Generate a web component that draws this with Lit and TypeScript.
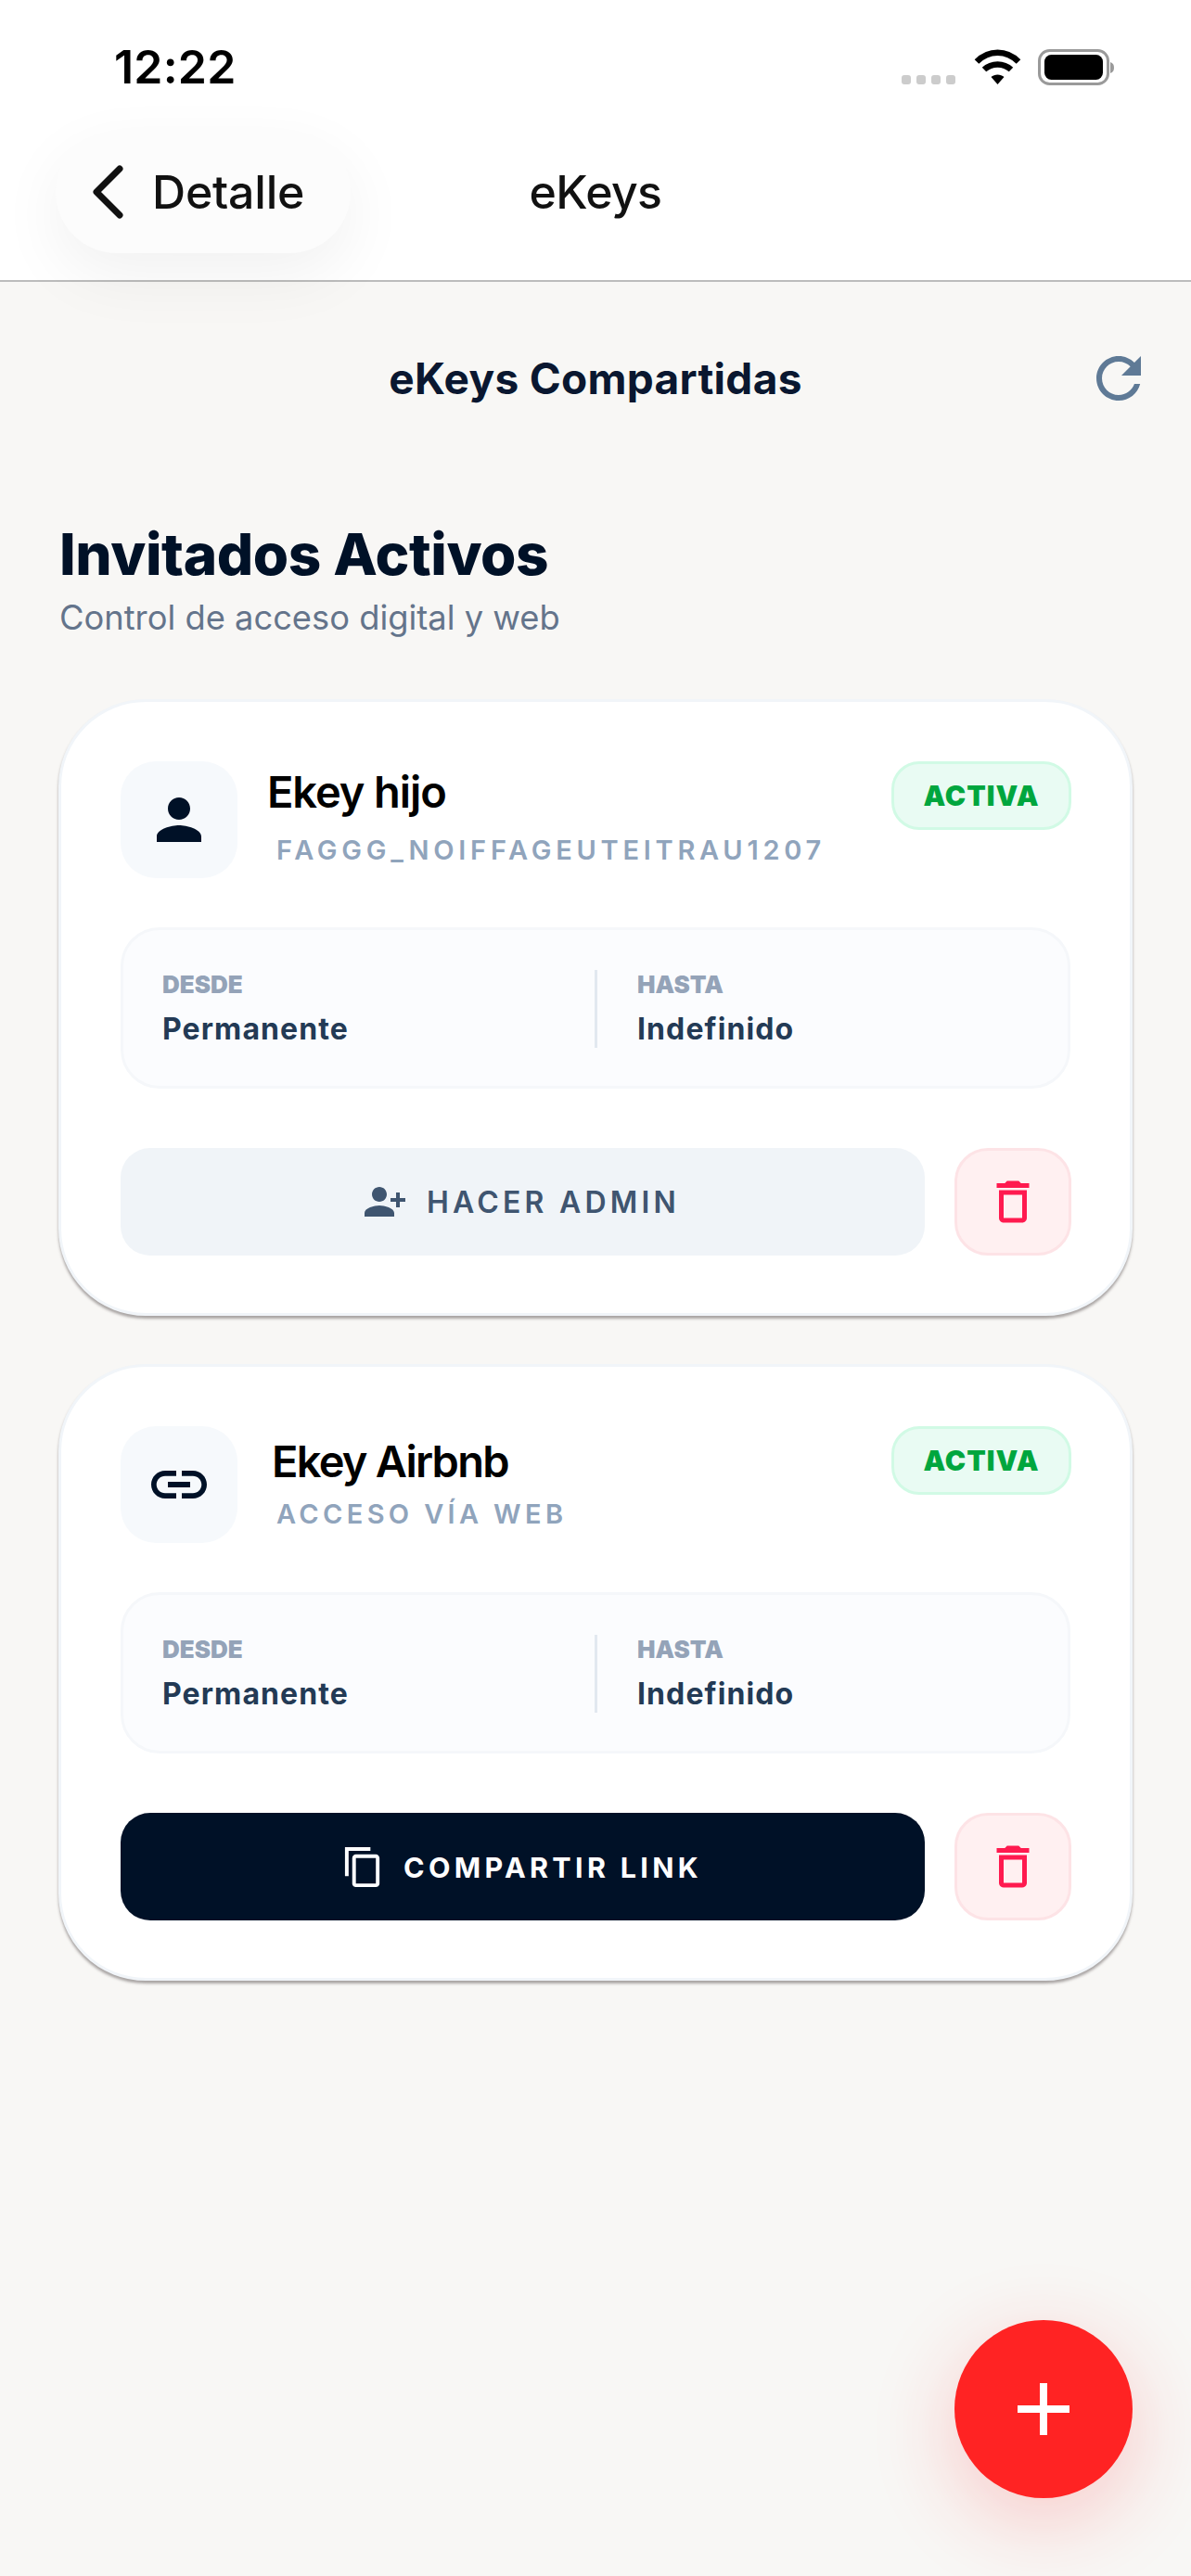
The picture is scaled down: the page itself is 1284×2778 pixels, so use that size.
import { LitElement, html, css, svg } from "lit";
import { customElement } from "lit/decorators.js";

const ico = (size: number, body: unknown, cls = "") =>
  html`<svg class=${cls} width=${size} height=${size} viewBox="0 0 24 24" fill="currentColor">${body}</svg>`;

const PERSON = svg`<path d="M12 12c2.21 0 4-1.79 4-4s-1.79-4-4-4-4 1.79-4 4 1.79 4 4 4zm0 2c-2.67 0-8 1.34-8 4v2h16v-2c0-2.66-5.33-4-8-4z"/>`;
const LINK = svg`<path d="M3.9 12c0-1.71 1.39-3.1 3.1-3.1h4V7H7c-2.76 0-5 2.24-5 5s2.24 5 5 5h4v-1.9H7c-1.71 0-3.1-1.39-3.1-3.1zM8 13h8v-2H8v2zm9-6h-4v1.9h4c1.71 0 3.1 1.39 3.1 3.1s-1.39 3.1-3.1 3.1h-4V17h4c2.76 0 5-2.24 5-5s-2.24-5-5-5z"/>`;
const TRASH = svg`<path d="M6 19c0 1.1.9 2 2 2h8c1.1 0 2-.9 2-2V7H6v12zM8 9h8v10H8V9zm7.5-5l-1-1h-5l-1 1H5v2h14V4h-3.5z"/>`;
const ADD = svg`<path transform="translate(24 0) scale(-1 1)" d="M15 12c2.21 0 4-1.79 4-4s-1.79-4-4-4-4 1.79-4 4 1.79 4 4 4zm-9-2V7H4v3H1v2h3v3h2v-3h3v-2H6zm9 4c-2.67 0-8 1.34-8 4v2h16v-2c0-2.66-5.33-4-8-4z"/>`;
const COPY = svg`<path d="M16 1H2v16h2V3h12V1zm3 4H8c-1.1 0-2 .9-2 2v14c0 1.1.9 2 2 2h11c1.1 0 2-.9 2-2V7c0-1.1-.9-2-2-2zm0 16H8V7h11v14z"/>`;
const REFRESH = svg`<path d="M17.65 6.35C16.2 4.9 14.21 4 12 4c-4.42 0-7.99 3.58-7.99 8s3.57 8 7.99 8c3.73 0 6.84-2.55 7.73-6h-2.08c-.82 2.33-3.04 4-5.65 4-3.31 0-6-2.69-6-6s2.69-6 6-6c1.66 0 3.14.69 4.22 1.78L13 11h7V4l-2.35 2.35z"/>`;

@customElement("app-root")
export class AppRoot extends LitElement {
  static styles = css`
    :host { display: block; font-family: Inter, "Liberation Sans", sans-serif; }
    * { box-sizing: border-box; }
    .page { position: relative; width: 1284px; height: 2778px; background: #f8f7f5; overflow: hidden; }

    .top { background: #fff; height: 304px; border-bottom: 2px solid #bcbcbc; }
    .status { height: 141px; display: flex; justify-content: space-between; padding: 47px 82px 0 123px; }
    .time { font-size: 50px; font-weight: 600; line-height: 50px; color: #000; letter-spacing: 0.2px; }
    .status-icons { display: flex; gap: 0; height: 40px; margin-top: 6px; }
    .status-icons svg { display: block; }

    .nav { display: grid; grid-template-columns: 1fr auto 1fr; align-items: center; height: 132px; padding-left: 60px; }
    .back { justify-self: start; display: flex; align-items: center; gap: 31px; width: 318px; height: 132px; padding-left: 40px;
      border-radius: 66px; background: #fcfcfc; box-shadow: 0 24px 70px rgba(0, 0, 0, 0.06); color: #111; font-size: 50px; font-weight: 450; letter-spacing: -0.2px; }
    .nav-title { font-size: 50px; font-weight: 500; color: #111; margin-left: -60px; letter-spacing: -0.6px; }

    .section { display: grid; grid-template-columns: 1fr auto 1fr; align-items: center; height: 72px; margin-top: 68px; padding-right: 42px; }
    .section h2 { grid-column: 2; margin: 0; font-size: 46px; font-weight: 700; color: #0a1730; margin-right: -42px; letter-spacing: 0.3px; }
    .refresh { grid-column: 3; justify-self: end; color: #5f7a96; display: block; }

    .intro { padding: 116px 64px 0; }
    .intro h1 { margin: 0; font-size: 62px; line-height: 76px; font-weight: 800; color: #001127; letter-spacing: -0.4px; }
    .intro p { margin: 8px 0 0; font-size: 36.3px; line-height: 44px; color: #64748b; font-weight: 400; }

    .cards { display: flex; flex-direction: column; gap: 52px; padding: 0 63px; margin-top: 66px; }
    .card { height: 665px; border: 3px solid #f1f5f9; border-radius: 94px; background: #fff; padding: 64px 63px 0 64px;
      box-shadow: 0 3px 3px rgba(60, 50, 50, 0.42); }

    .head { display: flex; height: 126px; }
    .avatar { width: 126px; height: 126px; flex: none; border-radius: 38px; background: #f6f9fc; color: #001127;
      display: flex; align-items: center; justify-content: center; }
    .who { flex: 1; min-width: 0; display: flex; flex-direction: column; }
    .name { font-size: 47px; line-height: 56px; font-weight: 640; color: #000; }
    .sub { font-size: 29px; line-height: 36px; font-weight: 600; color: #90a4bc; white-space: nowrap; margin-left: 42px; }
    .person .name { margin: 5px 0 0 32px; letter-spacing: -1.1px; }
    .person .sub { margin-top: 17px; letter-spacing: 4.74px; }
    .weblink .name { margin: 10px 0 0 37px; letter-spacing: -1.75px; }
    .weblink .sub { margin-top: 11px; letter-spacing: 4.35px; }
    .badge { flex: none; width: 194px; height: 74px; border: 3px solid #d1fae5; border-radius: 30px; background: #e9fbf3;
      color: #00a63e; font-size: 30px; font-weight: 900; letter-spacing: 1px; display: flex; align-items: center; justify-content: center; }

    .info { display: flex; height: 174px; margin-top: 53px; margin-right: 1px; padding: 43px 0 0 42px; border: 3px solid #f5f7fa; border-radius: 42px; background: #fbfcfe; }
    .col { width: 466px; height: 84px; }
    .col + .col { width: auto; border-left: 3px solid #e2e8f0; padding-left: 43px; }
    .lab { font-size: 26px; line-height: 32px; font-weight: 900; color: #94a3b8; }
    .val { font-size: 32px; line-height: 40px; margin-top: 12px; font-weight: 700; color: #233a55; letter-spacing: 1.1px; white-space: nowrap; }

    .actions { display: flex; gap: 32px; margin-top: 64px; }
    .btn { flex: 1; height: 116px; border-radius: 32px; display: flex; align-items: center; justify-content: center;
      font-size: 32px; font-weight: 600; letter-spacing: 4.2px; white-space: nowrap; }
    .btn.soft { background: #f0f4f8; color: #3f5570; gap: 21px; padding-right: 3px; }
    .btn.dark { background: #001127; color: #fff; gap: 20px; font-size: 30.5px; font-weight: 700; letter-spacing: 4.3px; padding-right: 2px; }
    .del { width: 126px; height: 116px; flex: none; border: 3px solid #fde3e6; border-radius: 36px; background: #fff0f1; color: #ff1a4f;
      display: flex; align-items: center; justify-content: center; }

    .fab { position: absolute; left: 1029px; top: 2502px; width: 192px; height: 192px; border-radius: 50%; background: #ff2323;
      box-shadow: 0 24px 90px rgba(255, 35, 35, 0.22); display: flex; align-items: center; justify-content: center; }
  `;

  private card(kind: string, icon: unknown, name: string, sub: string, action: unknown) {
    return html`<section class="card ${kind}">
      <div class="head">
        <div class="avatar">${ico(72, icon)}</div>
        <div class="who"><div class="name">${name}</div><div class="sub">${sub}</div></div>
        <div class="badge">ACTIVA</div>
      </div>
      <div class="info">
        <div class="col"><div class="lab">DESDE</div><div class="val">Permanente</div></div>
        <div class="col"><div class="lab">HASTA</div><div class="val">Indefinido</div></div>
      </div>
      <div class="actions">
        ${action}
        <div class="del">${ico(60, TRASH)}</div>
      </div>
    </section>`;
  }

  render() {
    return html`<div class="page">
      <header class="top">
        <div class="status">
          <div class="time">12:22</div>
          <div class="status-icons">
            <svg width="230" height="40" viewBox="0 0 230 40">
              <g fill="#cccccc">
                <rect x="0" y="28" width="10" height="10" rx="3"/><rect x="16" y="28" width="10" height="10" rx="3"/>
                <rect x="32" y="28" width="10" height="10" rx="3"/><rect x="48" y="28" width="10" height="10" rx="3"/>
              </g>
              <g fill="none" stroke="#000" stroke-width="6.5">
                <path d="M81 13.5 C94 0.5 113 0.5 126 13.5"/>
                <path d="M89 22 C97 14.5 110 14.5 118 22"/>
              </g>
              <path d="M96.5 30 C100 26.5 107 26.5 110.5 30 L103.5 38 Z" fill="#000"/>
              <rect x="148.5" y="1.5" width="74" height="36" rx="11" fill="none" stroke="#9a9a9a" stroke-width="3"/>
              <rect x="154" y="6" width="63" height="27" rx="7.5" fill="#000"/>
              <path d="M225 14 C228 15 229 17 229 20 C229 23 228 25 225 26 Z" fill="#9a9a9a"/>
            </svg>
          </div>
        </div>
        <nav class="nav">
          <div class="back">
            <svg width="33" height="58" viewBox="0 0 33 58"><path d="M29 4 L4 29 L29 54" fill="none" stroke="#111" stroke-width="7" stroke-linecap="round" stroke-linejoin="round"/></svg>
            <span>Detalle</span>
          </div>
          <div class="nav-title">eKeys</div>
        </nav>
      </header>

      <div class="section">
        <h2>eKeys Compartidas</h2>
        ${ico(72, REFRESH, "refresh")}
      </div>

      <div class="intro">
        <h1>Invitados Activos</h1>
        <p>Control de acceso digital y web</p>
      </div>

      <div class="cards">
        ${this.card("person", PERSON, "Ekey hijo", "FAGGG_NOIFFAGEUTEITRAU1207",
          html`<div class="btn soft">${ico(48, ADD)}<span>HACER ADMIN</span></div>`)}
        ${this.card("weblink", LINK, "Ekey Airbnb", "ACCESO VÍA WEB",
          html`<div class="btn dark">${ico(47, COPY)}<span>COMPARTIR LINK</span></div>`)}
      </div>

      <div class="fab">
        <svg width="56" height="56" viewBox="0 0 56 56"><path d="M24 0h8v24h24v8H32v24h-8V32H0v-8h24z" fill="#fff"/></svg>
      </div>
    </div>`;
  }
}
